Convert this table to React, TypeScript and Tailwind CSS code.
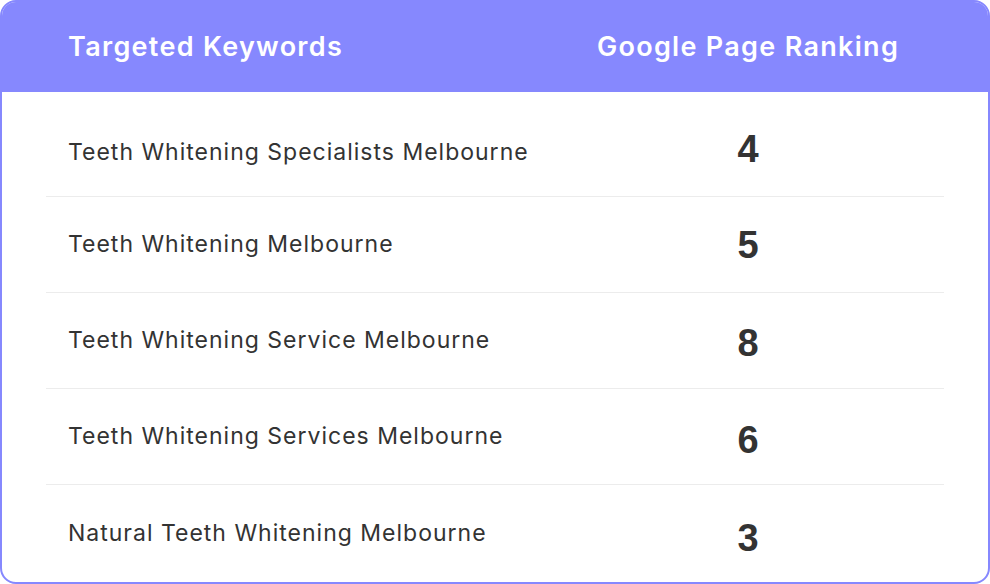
import React from "react";

const rows = [
  { k: "Teeth Whitening Specialists Melbourne", r: "4", o: "-mt-[6px]" },
  { k: "Teeth Whitening Melbourne", r: "5", o: "mt-[2px]" },
  { k: "Teeth Whitening Service Melbourne", r: "8", o: "mt-[6px]" },
  { k: "Teeth Whitening Services Melbourne", r: "6", o: "mt-[8px]" },
  { k: "Natural Teeth Whitening Melbourne", r: "3", o: "mt-[10px]" },
];

export default function App() {
  return (
    <div className="w-[990px] h-[584px] bg-white">
      <div className="w-[990px] h-[584px] rounded-[16px] border-2 border-[#8688fe] overflow-hidden bg-white flex flex-col">
        <div
          className="h-[90px] shrink-0 bg-[#8688fe] flex items-center px-[44px] text-white text-[27px] font-semibold tracking-[1.3px]"
          style={{ fontFamily: '"Inter", "Noto Sans", sans-serif' }}
        >
          <div className="flex-1 pl-[22px]">Targeted Keywords</div>
          <div className="w-[392px] text-center">Google Page Ranking</div>
        </div>
        <div className="mx-[44px] flex flex-col">
          {rows.map((row, i) => (
            <div
              key={row.k}
              className={
                "flex items-center " +
                (i === 0 ? "h-[105px] pt-[16px] " : "h-[96px] ") +
                (i < rows.length - 1 ? "border-b border-[#ececec]" : "")
              }
            >
              <div
                className="flex-1 pl-[22px] text-[23px] tracking-[1px] text-[#333333]"
                style={{ fontFamily: '"Inter", "Noto Sans", sans-serif' }}
              >
                {row.k}
              </div>
              <div
                className={"w-[392px] text-center text-[38px] font-bold text-[#333333] " + row.o}
                style={{ fontFamily: '"Liberation Sans", Arial, sans-serif' }}
              >
                {row.r}
              </div>
            </div>
          ))}
        </div>
      </div>
    </div>
  );
}
